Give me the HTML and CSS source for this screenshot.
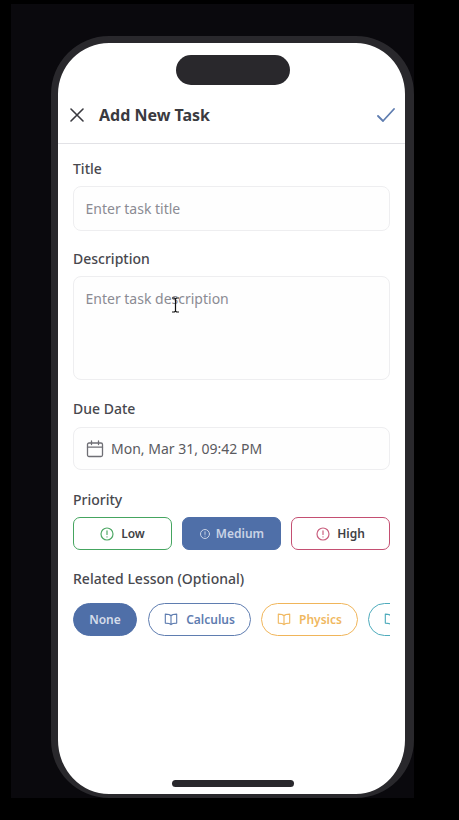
FILE: index.html
```html
<!DOCTYPE html>
<html lang="en">

<head>
    <meta charset="UTF-8">
    <meta name="viewport" content="width=device-width, initial-scale=1.0">
    <title>Add New Task</title>
    <link rel="stylesheet" href="styles.css">
</head>

<body>
    <div class="stage">
        <div class="phone">
            <div class="island"></div>

            <header class="top-bar">
                <svg class="icon-close" viewBox="0 0 14 14" width="14" height="14" fill="none" stroke="#3a3a40" stroke-width="1.6" stroke-linecap="round">
                    <path d="M1 1l12 12M13 1L1 13" />
                </svg>
                <h1>Add New Task</h1>
                <svg class="icon-check" viewBox="0 0 18 14" width="18" height="14" fill="none" stroke="#5f7db0" stroke-width="1.8" stroke-linecap="round" stroke-linejoin="round">
                    <path d="M1 8l5 5L17 1" />
                </svg>
            </header>

            <form class="task-form">
                <div class="field">
                    <label for="title">Title</label>
                    <input type="text" id="title" class="text-input" placeholder="Enter task title">
                </div>

                <div class="field field-desc">
                    <label for="desc">Description</label>
                    <textarea id="desc" class="text-input text-area" placeholder="Enter task description"></textarea>
                </div>

                <div class="field field-date">
                    <label>Due Date</label>
                    <div class="date-input">
                        <svg viewBox="0 0 18 18" width="18" height="18" fill="none" stroke="#6e6e74" stroke-width="1.3" stroke-linecap="round">
                            <rect x="1.500" y="3" width="15" height="13.500" rx="1.500" />
                            <path d="M1.500 7.200h15M5.500 1v3.500M12.500 1v3.500" />
                        </svg>
                        <span>Mon, Mar 31, 09:42 PM</span>
                    </div>
                </div>

                <div class="field field-priority">
                    <label>Priority</label>
                    <div class="priority-row">
                        <button type="button" class="priority low">
                            <svg viewBox="0 0 14 14" width="14" height="14" fill="none" stroke="#4fa866" stroke-width="1.2" stroke-linecap="round">
                                <circle cx="7" cy="7" r="6" />
                                <path d="M7 3.800v3.600M7 9.800v.2" />
                            </svg>
                            Low
                        </button>
                        <button type="button" class="priority medium">
                            <svg viewBox="0 0 12 12" width="12" height="12" fill="none" stroke="#c9d3e5" stroke-width="1" stroke-linecap="round">
                                <circle cx="6" cy="6" r="4.500" />
                                <path d="M6 3.800v2.600M6 8.100v.1" />
                            </svg>
                            Medium
                        </button>
                        <button type="button" class="priority high">
                            <svg viewBox="0 0 14 14" width="14" height="14" fill="none" stroke="#c9607f" stroke-width="1.2" stroke-linecap="round">
                                <circle cx="7" cy="7" r="6" />
                                <path d="M7 3.800v3.600M7 9.800v.2" />
                            </svg>
                            High
                        </button>
                    </div>
                </div>

                <div class="field">
                    <label class="label-wide">Related Lesson (Optional)</label>
                    <div class="lesson-row">
                        <button type="button" class="chip chip-none">None</button>
                        <button type="button" class="chip chip-calculus">
                            <svg class="book" viewBox="0 0 16 14" width="14" height="13" fill="none" stroke="currentColor" stroke-width="1.3" stroke-linejoin="round" preserveAspectRatio="none">
                                <path d="M8 3C7 1.800 5 1.200 1.500 1.200v9.600c3.500 0 5.500.5 6.500 1.700 1-1.200 3-1.700 6.500-1.700V1.200C11 1.200 9 1.800 8 3zM8 3v9.500" />
                            </svg>
                            Calculus
                        </button>
                        <button type="button" class="chip chip-physics">
                            <svg class="book" viewBox="0 0 16 14" width="14" height="13" fill="none" stroke="currentColor" stroke-width="1.3" stroke-linejoin="round" preserveAspectRatio="none">
                                <path d="M8 3C7 1.800 5 1.200 1.500 1.200v9.600c3.500 0 5.500.5 6.500 1.700 1-1.200 3-1.700 6.500-1.700V1.200C11 1.200 9 1.800 8 3zM8 3v9.500" />
                            </svg>
                            Physics
                        </button>
                        <!-- only the left end of this chip is in view -->
                        <button type="button" class="chip chip-other" aria-label="Lesson">
                            <svg class="book" viewBox="0 0 16 14" width="14" height="13" fill="none" stroke="currentColor" stroke-width="1.3" stroke-linejoin="round" preserveAspectRatio="none">
                                <path d="M8 3C7 1.800 5 1.200 1.500 1.200v9.600c3.500 0 5.500.5 6.500 1.700 1-1.200 3-1.700 6.500-1.700V1.200C11 1.200 9 1.800 8 3zM8 3v9.500" />
                            </svg>
                        </button>
                    </div>
                </div>
            </form>

            <!-- text cursor caught in the recording -->
            <svg class="cursor" viewBox="0 0 9 16" width="9" height="16" fill="none" stroke="#111" stroke-width="1.2">
                <path d="M1 1h2.500l1 1 1-1H8M4.500 2v12M1 15h2.500l1-1 1 1H8" />
            </svg>

            <div class="home-bar"></div>
        </div>
    </div>
</body>

</html>
```

FILE: styles.css
```css
* {
    box-sizing: border-box;
}

body {
    font-family: "Noto Sans", Arial, sans-serif;
    margin: 0;
    padding: 0;
    background-color: #000;
    height: 820px;
    overflow: hidden;
}

.stage {
    width: 403px;
    height: 794px;
    margin: 4px 0 0 11px;
    padding: 32px 0 0 40px;
    background-color: #0a090d;
}

.phone {
    position: relative;
    width: 363px;
    height: 762px;
    padding-top: 43px;
    border-style: solid;
    border-color: #29282c;
    border-width: 7px 9px 4px 7px;
    border-radius: 58px;
    background-color: #fff;
    overflow: hidden;
}

.island {
    position: absolute;
    top: 12px;
    left: 118px;
    width: 114px;
    height: 30px;
    border-radius: 15px;
    background-color: #29282c;
}

.top-bar {
    display: flex;
    align-items: center;
    height: 58px;
    padding: 1px 10px 0 12px;
    border-bottom: 1px solid #e2e2e6;
}

.top-bar h1 {
    flex: 1;
    margin: 0 0 0 15px;
    font-size: 16px;
    font-weight: 700;
    color: #3a3a40;
}

.task-form {
    padding: 15px 15px 0;
}

.field {
    margin-bottom: 18px;
}

.field-desc {
    margin-bottom: 19px;
}

.field-date {
    margin-bottom: 20px;
}

.field-priority {
    margin-bottom: 19px;
}

.field label {
    display: block;
    margin-bottom: 7px;
    font-size: 14px;
    line-height: 20px;
    font-weight: 500;
    color: #48484e;
}

.field-date label {
    margin-bottom: 8px;
}

.field .label-wide {
    margin-bottom: 14px;
}

.text-input {
    display: block;
    width: 100%;
    height: 45px;
    padding: 0 11.5px;
    border: 1px solid #eeeef0;
    border-radius: 8px;
    background-color: #fefefe;
    font-family: inherit;
    font-size: 14px;
    outline: none;
}

.text-input::placeholder {
    color: #8b8b93;
    opacity: 1;
}

.text-area {
    height: 104px;
    padding-top: 12px;
    resize: none;
    overflow: hidden;
}

.date-input {
    display: flex;
    align-items: center;
    gap: 7px;
    height: 43px;
    padding: 0 12px;
    border: 1px solid #eeeef0;
    border-radius: 8px;
    background-color: #fefefe;
    font-size: 14px;
    color: #5a5a60;
}

.priority-row {
    display: flex;
    gap: 10px;
}

.priority {
    flex: 1;
    display: flex;
    align-items: center;
    justify-content: center;
    gap: 7px;
    height: 33px;
    padding: 0;
    border: 1px solid;
    border-radius: 7px;
    background-color: #fff;
    font-family: inherit;
    font-size: 12px;
    font-weight: 600;
    color: #3f3f45;
}

.low {
    border-color: #45a560;
}

.medium {
    gap: 5px;
    border-color: #4f6fa8;
    background-color: #4f6fa8;
    color: #c9d3e5;
}

.high {
    border-color: #c44f72;
}

.lesson-row {
    display: flex;
    gap: 10px;
    overflow: hidden;
}

.chip {
    flex: none;
    display: flex;
    align-items: center;
    justify-content: center;
    gap: 8px;
    height: 33px;
    padding: 0;
    border: 1px solid;
    border-radius: 17px;
    background-color: #fff;
    font-family: inherit;
    font-size: 12px;
    font-weight: 600;
}

.chip-none {
    width: 64px;
    margin-right: 1px;
    border-color: #4f6fa8;
    background-color: #4f6fa8;
    color: #d5dcea;
}

.chip-calculus {
    width: 103px;
    border-color: #5f7db0;
    color: #5f7db0;
}

.chip-physics {
    width: 97px;
    border-color: #f0b55a;
    color: #f0b860;
}

.chip-other {
    width: 100px;
    padding-left: 15px;
    justify-content: flex-start;
    border-color: #4eabbc;
    color: #4eabbc;
}

.cursor {
    position: absolute;
    top: 254px;
    left: 113px;
}

.home-bar {
    position: absolute;
    bottom: 7px;
    left: 114px;
    width: 122px;
    height: 7px;
    border-radius: 4px;
    background-color: #29282c;
}
```
